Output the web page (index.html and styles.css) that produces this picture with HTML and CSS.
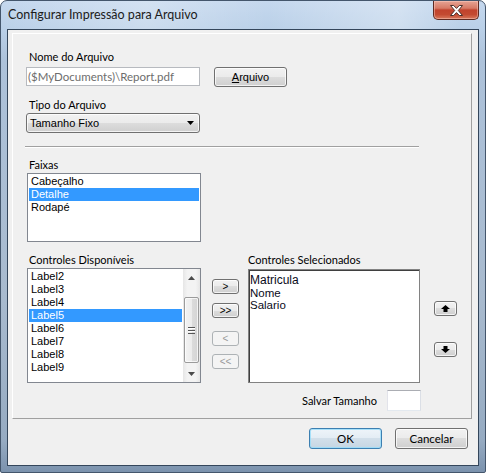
FILE: index.html
```html
<!DOCTYPE html>
<html lang="pt">
<head>
<meta charset="utf-8">
<title>Configurar Impressão para Arquivo</title>
<link rel="stylesheet" href="styles.css">
</head>
<body>
<div class="window">
  <div class="titlebar">
    <span class="title">Configurar Impressão para Arquivo</span>
    <div class="close-btn">
      <svg width="13" height="11" viewBox="0 0 13 11"><polygon points="0.5,0.5 3.7,0.5 6.5,3.4 9.3,0.5 12.5,0.5 8.3,5.5 12.5,10.5 9.3,10.5 6.5,7.6 3.7,10.5 0.5,10.5 4.7,5.5" fill="#fff" stroke="#4a302b" stroke-width="1" stroke-linejoin="round"/></svg>
    </div>
  </div>
  <div class="client">
    <div class="panel">
      <div class="lbl">Nome do Arquivo</div>
      <div class="file-row">
        <div class="textbox disabled">($MyDocuments)\Report.pdf</div>
        <button class="btn file-btn"><u>A</u>rquivo</button>
      </div>
      <div class="lbl tipo-lbl">Tipo do Arquivo</div>
      <div class="combo">
        <span>Tamanho Fixo</span>
        <svg width="7" height="4" viewBox="0 0 7 4"><polygon points="0,0 7,0 3.5,4" fill="#000"/></svg>
      </div>
      <div class="sep"></div>
      <div class="lbl faixas-lbl">Faixas</div>
      <div class="listbox faixas">
        <div class="item">Cabeçalho</div>
        <div class="item sel">Detalhe</div>
        <div class="item">Rodapé</div>
      </div>
      <div class="controls">
        <div class="lbl avail-lbl">Controles Disponíveis</div>
        <div></div>
        <div class="lbl chosen-lbl">Controles Selecionados</div>
        <div></div>

        <div class="listbox avail">
          <div class="items">
            <div class="item">Label2</div>
            <div class="item">Label3</div>
            <div class="item">Label4</div>
            <div class="item sel">Label5</div>
            <div class="item">Label6</div>
            <div class="item">Label7</div>
            <div class="item">Label8</div>
            <div class="item">Label9</div>
          </div>
          <div class="vscroll">
            <div class="sb-btn"><svg width="7" height="4" viewBox="0 0 7 4"><polygon points="0,4 7,4 3.5,0" fill="#4a4a4a"/></svg></div>
            <div class="sb-track">
              <div class="sb-thumb">
                <svg width="7" height="7" viewBox="0 0 7 7"><rect x="0" y="0" width="7" height="1" fill="#555"/><rect x="0" y="3" width="7" height="1" fill="#555"/><rect x="0" y="6" width="7" height="1" fill="#555"/><rect x="0" y="1" width="7" height="1" fill="#fff"/><rect x="0" y="4" width="7" height="1" fill="#fff"/></svg>
              </div>
            </div>
            <div class="sb-btn"><svg width="7" height="4" viewBox="0 0 7 4"><polygon points="0,0 7,0 3.5,4" fill="#4a4a4a"/></svg></div>
          </div>
        </div>

        <div class="move-btns">
          <button class="btn small b1">&gt;</button>
          <button class="btn small b2">&gt;&gt;</button>
          <button class="btn small b3" disabled>&lt;</button>
          <button class="btn small b4" disabled>&lt;&lt;</button>
        </div>

        <div class="listbox chosen">
          <div class="item big">Matricula</div>
          <div class="item plain">Nome</div>
          <div class="item plain">Salario</div>
        </div>

        <div class="order-btns">
          <button class="btn updown"><svg width="9" height="7" viewBox="0 0 9 7"><path d="M4.5 0 L9 4 L6.5 4 L6.5 7 L2.5 7 L2.5 4 L0 4 Z" fill="#000"/></svg></button>
          <button class="btn updown down"><svg width="9" height="7" viewBox="0 0 9 7"><path d="M2.5 0 L6.5 0 L6.5 3 L9 3 L4.5 7 L0 3 L2.5 3 Z" fill="#000"/></svg></button>
        </div>

        <div class="save-row">
          <span class="save-lbl">Salvar Tamanho</span>
          <div class="textbox size-box"></div>
        </div>
      </div>
    </div>
    <div class="footer">
      <button class="btn dlg default">OK</button>
      <button class="btn dlg">Cancelar</button>
    </div>
  </div>
</div>
</body>
</html>
```
FILE: styles.css
```css
html, body {
  margin: 0;
  padding: 0;
  background: #ffffff;
}

.window {
  width: 486px;
  height: 473px;
  box-sizing: border-box;
  border: 1px solid #44566c;
  border-radius: 7px 7px 2px 2px;
  padding: 0 6px 6px 6px;
  display: flex;
  flex-direction: column;
  overflow: hidden;
  background:
    linear-gradient(90deg, rgba(255,255,255,0) 0, rgba(255,255,255,0.25) 30%, rgba(255,255,255,0) 55%, rgba(255,255,255,0.3) 82%, rgba(255,255,255,0) 95%) top / 100% 30px no-repeat,
    linear-gradient(180deg, #c5d8ee 0, #bad0e8 28px, #adc2da 60px, #a8bace 300px, #96abc2 440px, #7b92ad 100%);
}

.titlebar {
  height: 28px;
  display: flex;
  justify-content: space-between;
  align-items: flex-start;
}

.title {
  font-family: Lato, "Open Sans", sans-serif;
  font-size: 12.5px;
  line-height: 15px;
  color: #1b1b1b;
  padding: 6px 0 0 1px;
  white-space: nowrap;
}

.close-btn {
  width: 46px;
  height: 19px;
  box-sizing: border-box;
  border: 1px solid #5f2a22;
  border-top: none;
  border-radius: 0 0 5px 5px;
  background: linear-gradient(180deg, #e6a394 0, #d77a66 40%, #c1432d 50%, #c34a31 75%, #d8795d 100%);
  box-shadow: inset 0 0 0 1px rgba(255, 210, 200, 0.45);
  display: flex;
  align-items: center;
  justify-content: center;
}

.close-btn svg {
  display: block;
}

.client {
  flex: 1;
  border: 1px solid #34465b;
  background: #f0f0f0;
  display: flex;
  flex-direction: column;
}

.panel {
  margin: 3px 6px 0 4px;
  border: 1px solid;
  border-color: #ffffff #a0a0a0 #a0a0a0 #ffffff;
  padding: 15px 0 7px 13px;
}

.lbl {
  font-family: Lato, "Open Sans", sans-serif;
  font-size: 11px;
  line-height: 15px;
  color: #000;
  padding-left: 3px;
  white-space: nowrap;
}

.file-row {
  display: flex;
  align-items: flex-start;
  gap: 14px;
  margin-top: 3px;
}

.textbox {
  box-sizing: border-box;
  background: #ffffff;
  border: 1px solid;
  border-color: #abadb3 #dbdfe6 #e3e9ef #e2e3ea;
}

.textbox.disabled {
  width: 174px;
  height: 19px;
  border-color: #b7babf;
  color: #6d6d6d;
  font-family: Lato, "Open Sans", sans-serif;
  font-size: 11.5px;
  line-height: 17px;
  padding-left: 1px;
  white-space: nowrap;
}

.btn {
  box-sizing: border-box;
  border: 1px solid #707070;
  border-radius: 3px;
  background: linear-gradient(180deg, #f2f2f2 0, #ebebeb 50%, #dddddd 50%, #cfcfcf 100%);
  box-shadow: inset 0 0 0 1px rgba(255, 255, 255, 0.75);
  font-family: "Liberation Sans", Arial, sans-serif;
  font-size: 11px;
  color: #000;
  padding: 0;
  margin: 0;
  display: flex;
  align-items: center;
  justify-content: center;
}

.btn:disabled {
  border-color: #adb2b5;
  background: #f4f4f4;
  box-shadow: none;
  color: #9a9a9a;
}

.file-btn {
  width: 73px;
  height: 20px;
}

.tipo-lbl {
  margin-top: 10px;
}

.combo {
  margin-top: 1px;
  width: 174px;
  height: 20px;
  box-sizing: border-box;
  border: 1px solid #707070;
  border-radius: 3px;
  background: linear-gradient(180deg, #f2f2f2 0, #ebebeb 50%, #dddddd 50%, #cfcfcf 100%);
  box-shadow: inset 0 0 0 1px rgba(255, 255, 255, 0.75);
  display: flex;
  align-items: center;
  justify-content: space-between;
  padding: 0 5px 0 3px;
  font-family: "Liberation Sans", Arial, sans-serif;
  font-size: 11px;
  color: #000;
}

.combo svg {
  display: block;
}

.sep {
  margin: 13px 0 0 -1px;
  width: 394px;
  border-top: 1px solid #a0a0a0;
  border-bottom: 1px solid #ffffff;
}

.faixas-lbl {
  margin-top: 9px;
}

.listbox {
  box-sizing: border-box;
  background: #ffffff;
  border: 1px solid #828790;
}

.faixas {
  margin: 1px 0 0 1px;
  width: 174px;
  height: 69px;
  padding: 1px;
}

.item {
  font-family: "Liberation Sans", Arial, sans-serif;
  font-size: 11px;
  line-height: 13px;
  height: 13px;
  padding-left: 2px;
  color: #000;
  white-space: nowrap;
}

.item.sel {
  background: #3399ff;
  color: #ffffff;
}

.controls {
  margin: 10px 0 0 1px;
  display: grid;
  grid-template-columns: 185px 36px 186px 23px;
  grid-template-rows: auto auto auto;
  align-items: start;
}

.avail-lbl {
  padding-left: 2px;
  margin-bottom: 1px;
}

.chosen-lbl {
  padding-left: 0;
}

.avail {
  width: 174px;
  height: 115px;
  display: flex;
}

.avail .items {
  flex: 1;
  padding: 1px;
}

.vscroll {
  width: 17px;
  display: flex;
  flex-direction: column;
  background: linear-gradient(90deg, #e6e6e6 0, #f3f3f3 25%, #f3f3f3 75%, #e6e6e6 100%);
}

.sb-btn {
  height: 17px;
  display: flex;
  align-items: center;
  justify-content: center;
}

.sb-btn svg {
  display: block;
}

.sb-track {
  flex: 1;
}

.sb-thumb {
  margin: 11px 1px 0 1px;
  height: 66px;
  box-sizing: border-box;
  border: 1px solid #9b9b9b;
  border-radius: 2px;
  background: linear-gradient(90deg, #f3f3f3 0, #ececec 50%, #dcdcdc 50%, #d4d4d4 100%);
  box-shadow: inset 0 0 0 1px rgba(255, 255, 255, 0.7);
  display: flex;
  align-items: center;
  justify-content: center;
}

.sb-thumb svg {
  display: block;
}

.move-btns {
  display: flex;
  flex-direction: column;
  padding-top: 11px;
}

.btn.small {
  width: 27px;
  height: 15px;
  font-size: 10px;
  line-height: 13px;
}

.b2 {
  margin-top: 9px;
}

.b3 {
  margin-top: 13px;
}

.b4 {
  margin-top: 8px;
}

.chosen {
  margin-top: 1px;
  width: 172px;
  height: 114px;
  border-color: #828282;
  box-shadow: inset 1px 1px 0 #3f3f3f;
  padding: 3px 1px 0 1px;
}

.chosen .item {
  padding-left: 0;
  color: #0a0a1a;
}

.chosen .item.big {
  font-size: 12px;
  line-height: 14px;
  height: 14px;
}

.chosen .item.plain {
  font-size: 11.5px;
  line-height: 12px;
  height: 12px;
}

.order-btns {
  display: flex;
  flex-direction: column;
  padding-top: 33px;
}

.btn.updown {
  width: 23px;
  height: 15px;
}

.btn.updown svg {
  display: block;
}

.btn.updown.down {
  margin-top: 26px;
}

.save-row {
  grid-column: 3;
  justify-self: end;
  margin: 7px 13px 0 0;
  display: flex;
  align-items: center;
  gap: 10px;
}

.save-lbl {
  font-family: Lato, "Open Sans", sans-serif;
  font-size: 11px;
  color: #000;
  white-space: nowrap;
}

.size-box {
  width: 34px;
  height: 21px;
}

.footer {
  display: flex;
  justify-content: flex-end;
  gap: 13px;
  padding: 9px 10px 0 0;
}

.btn.dlg {
  width: 73px;
  height: 21px;
  font-family: Lato, "Open Sans", sans-serif;
  font-size: 11.5px;
}

.btn.default {
  border-color: #3c7fb1;
  background: linear-gradient(180deg, #eef4f9 0, #e3ecf4 50%, #d2dfea 50%, #c6d6e3 100%);
  box-shadow: inset 0 0 0 1px rgba(150, 220, 250, 0.8);
}
```
